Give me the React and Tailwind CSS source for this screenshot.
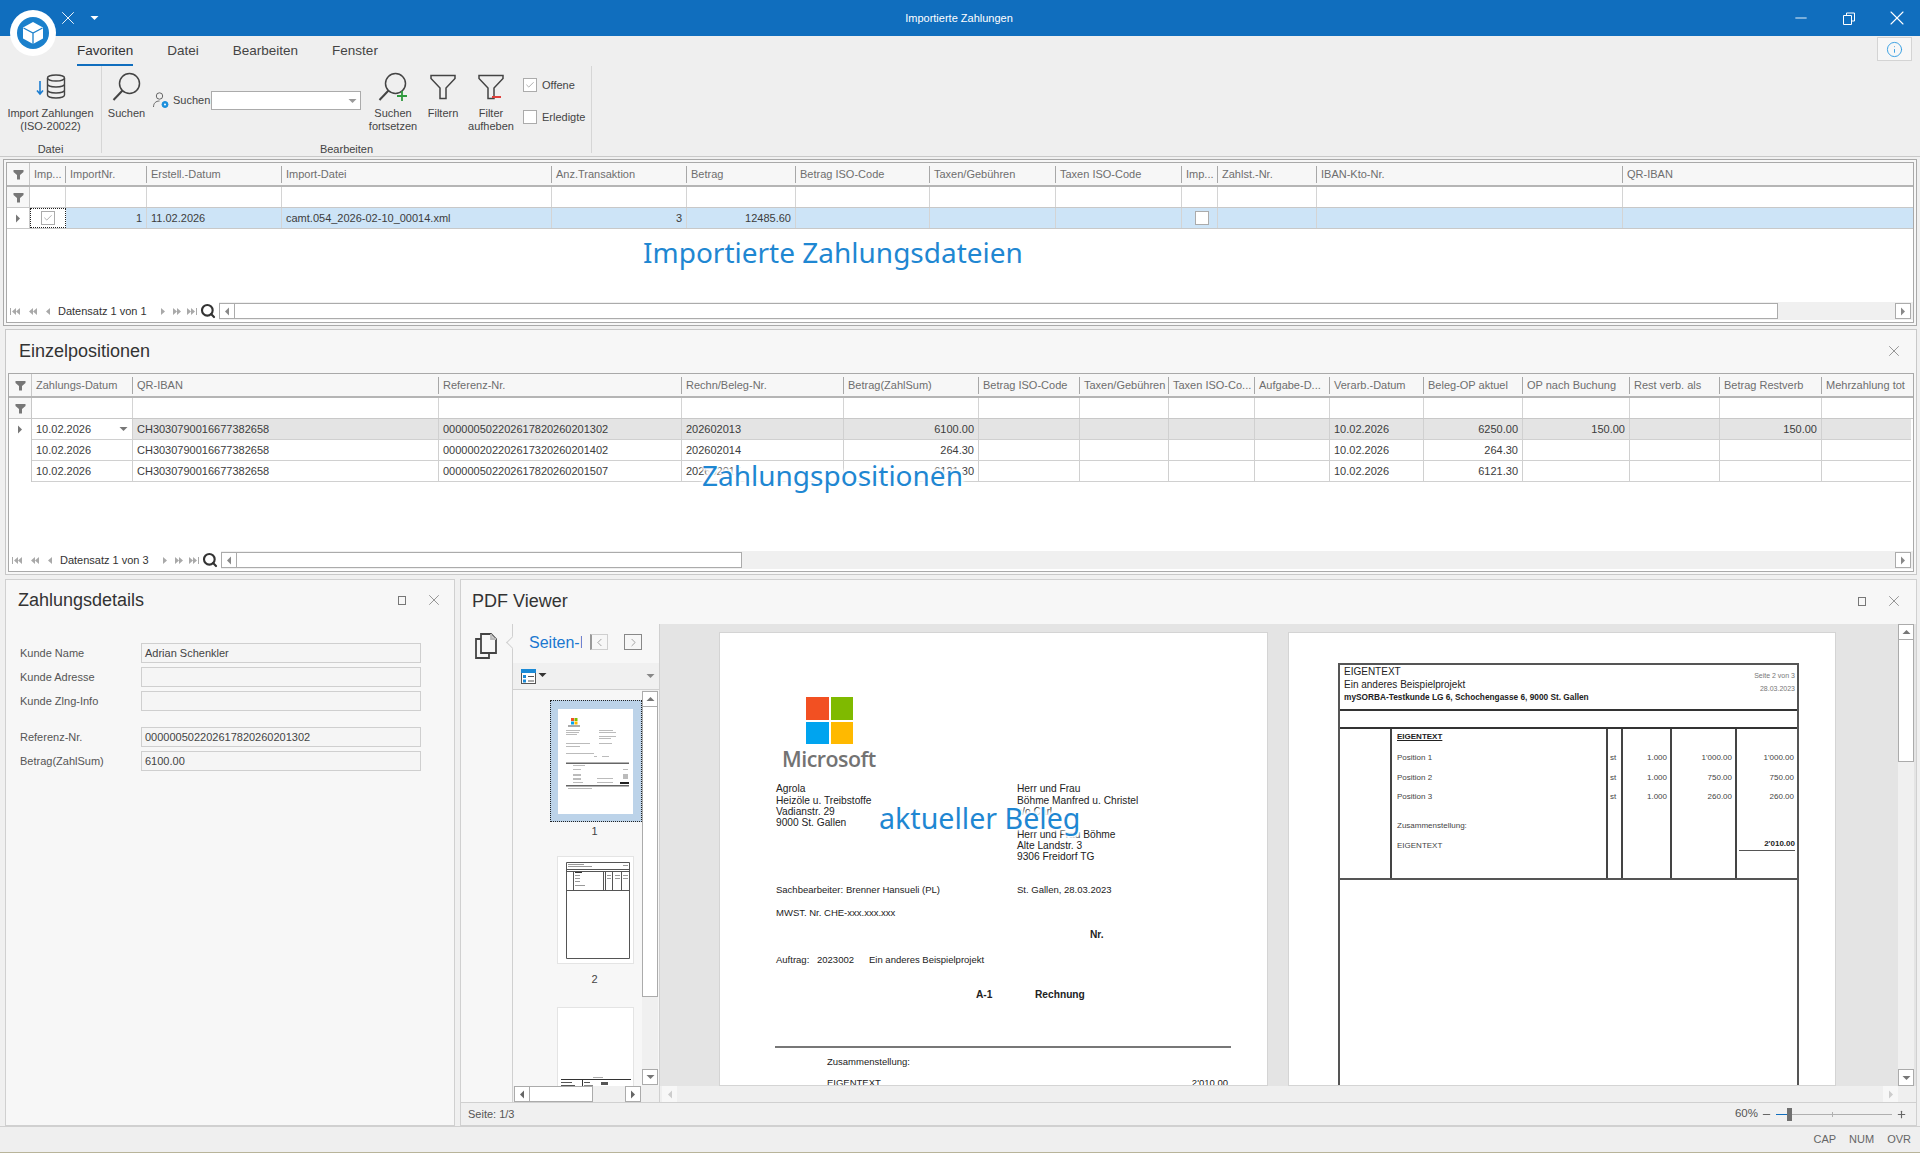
import { Check, X, Minus, Plus, Search, Info, ChevronLeft, ChevronRight } from 'lucide-react';

const grid1Cols = [
  { label: 'Imp...', w: 36 }, { label: 'ImportNr.', w: 81 }, { label: 'Erstell.-Datum', w: 135 }, { label: 'Import-Datei', w: 270 },
  { label: 'Anz.Transaktion', w: 135 }, { label: 'Betrag', w: 109 }, { label: 'Betrag ISO-Code', w: 134 }, { label: 'Taxen/Gebühren', w: 126 },
  { label: 'Taxen ISO-Code', w: 126 }, { label: 'Imp...', w: 36 }, { label: 'Zahlst.-Nr.', w: 99 }, { label: 'IBAN-Kto-Nr.', w: 306 }, { label: 'QR-IBAN', w: 290 },
];

const grid2Cols = [
  { label: 'Zahlungs-Datum', w: 101 }, { label: 'QR-IBAN', w: 306 }, { label: 'Referenz-Nr.', w: 243 }, { label: 'Rechn/Beleg-Nr.', w: 162 },
  { label: 'Betrag(ZahlSum)', w: 135 }, { label: 'Betrag ISO-Code', w: 101 }, { label: 'Taxen/Gebühren', w: 89 }, { label: 'Taxen ISO-Co...', w: 86 },
  { label: 'Aufgabe-D...', w: 75 }, { label: 'Verarb.-Datum', w: 94 }, { label: 'Beleg-OP aktuel', w: 99 }, { label: 'OP nach Buchung', w: 107 },
  { label: 'Rest verb. als', w: 90 }, { label: 'Betrag Restverb', w: 102 }, { label: 'Mehrzahlung tot', w: 89 },
];

const positions = [
  { date: '10.02.2026', iban: 'CH3030790016677382658', ref: '000000502202617820260201302', doc: '202602013', sum: '6100.00', done: '10.02.2026', op: '6250.00', after: '150.00', rest: '150.00' },
  { date: '10.02.2026', iban: 'CH3030790016677382658', ref: '000000202202617320260201402', doc: '202602014', sum: '264.30', done: '10.02.2026', op: '264.30', after: '', rest: '' },
  { date: '10.02.2026', iban: 'CH3030790016677382658', ref: '000000502202617820260201507', doc: '202602015', sum: '6121.30', done: '10.02.2026', op: '6121.30', after: '', rest: '' },
];

const Funnel = () => (
  <svg width="11" height="11" viewBox="0 0 11 11"><path d="M0.5 1h10v2L7 6v4.5H4V6L0.5 3z" fill="#777" /></svg>
);

const Arrow = ({ dir = 'right', color = '#666' }) => (
  <svg width="6" height="9" viewBox="0 0 6 9"><path d={dir === 'right' ? 'M1 0.5l4 4-4 4z' : 'M5 0.5l-4 4 4 4z'} fill={color} /></svg>
);

const Caret = ({ up = false, color = '#777' }) => (
  <svg width="9" height="6" viewBox="0 0 9 6"><path d={up ? 'M0.5 5l4-4 4 4z' : 'M0.5 1l4 4 4-4z'} fill={color} /></svg>
);

const CheckBox = ({ checked }) => (
  <span className="w-[14px] h-[14px] flex items-center justify-center bg-white border border-[#ababab] shrink-0">
    {checked && <Check size={10} strokeWidth={1.4} className="text-[#777]" />}
  </span>
);

const NavGlyph = ({ d, className = '' }) => (
  <svg width="12" height="9" viewBox="0 0 12 9" className={className}><path d={d} fill="#a9a9a9" /></svg>
);

const Pager = ({ text, thumbW }) => (
  <div className="h-[22px] flex items-center shrink-0 pl-[2px]">
    <NavGlyph d="M1 1h1v7H1zM7 1v7L3 4.5zM11 1v7L7 4.5z" />
    <NavGlyph d="M6 1v7L2 4.5zM10 1v7L6 4.5z" className="ml-[6px]" />
    <NavGlyph d="M7 1v7L3 4.5z" className="ml-[4px]" />
    <span className="ml-[3px] w-[96px] text-[#333]">{text}</span>
    <NavGlyph d="M5 1v7l4-3.5z" className="ml-[2px]" />
    <NavGlyph d="M2 1v7l4-3.5zM6 1v7l4-3.5z" className="ml-[3px]" />
    <NavGlyph d="M1 1v7l4-3.5zM5 1v7l4-3.5zM10 1h1v7h-1z" className="ml-[3px]" />
    <Search size={16} strokeWidth={3.2} className="ml-[2px] text-[#333]" />
    <div className="ml-[3px] flex-1 h-[18px] bg-[#f0f0f0] flex items-center pr-[2px]">
      <div className="w-[16px] h-[16px] bg-white border border-[#ababab] flex items-center justify-center"><Arrow dir="left" color="#888" /></div>
      <div className="h-[16px] bg-white border border-l-0 border-[#ababab]" style={{ width: thumbW }} />
      <div className="flex-1" />
      <div className="w-[16px] h-[16px] bg-white border border-[#ababab] flex items-center justify-center"><Arrow color="#888" /></div>
    </div>
  </div>
);

const HeaderRow = ({ cols, indW }) => (
  <div className="flex h-[24px] shrink-0 bg-[#f7f7f7] border-b-2 border-[#b5b5b5] text-[#6e6e6e]">
    <div className="flex items-center justify-center shrink-0 border-r border-[#c8c8c8]" style={{ width: indW }}><Funnel /></div>
    {cols.map((c, i) => (
      <div key={i} className="flex items-center shrink-0 pl-[4px] pt-[1px] whitespace-nowrap overflow-hidden relative" style={{ width: c.w }}>
        {c.label}
        {i < cols.length - 1 && <span className="absolute right-0 top-[3px] bottom-[2px] w-px bg-[#a8a8a8]" />}
      </div>
    ))}
  </div>
);

const FilterRow = ({ cols, indW }) => (
  <div className="flex h-[21px] shrink-0 bg-white border-b border-[#c8c8c8]">
    <div className="flex items-center justify-center shrink-0 bg-[#f7f7f7] border-r border-[#c8c8c8]" style={{ width: indW }}><Funnel /></div>
    {cols.map((c, i) => <div key={i} className="shrink-0 border-r border-[#d4d4d4] last:border-r-0" style={{ width: c.w }} />)}
  </div>
);

const ImportGrid = () => {
  const values = { 2: '11.02.2026', 3: 'camt.054_2026-02-10_00014.xml' };
  const right = { 1: '1', 4: '3', 5: '12485.60' };
  return (
    <div className="flex-1 flex flex-col bg-white border border-[#a9a9a9] min-h-0 relative">
      <HeaderRow cols={grid1Cols} indW={23} />
      <FilterRow cols={grid1Cols} indW={23} />
      <div className="flex h-[21px] shrink-0 border-b border-[#c8c8c8] bg-[#cde4f7] text-[#3c3c3c]">
        <div className="w-[23px] shrink-0 flex items-center justify-center bg-white border-r border-[#c8c8c8]"><Arrow color="#777" /></div>
        {grid1Cols.map((c, i) => i === 0 ? (
          <div key={i} className="shrink-0 flex items-center justify-center bg-white border border-dotted border-[#222]" style={{ width: c.w }}><CheckBox checked /></div>
        ) : (
          <div key={i} className={`shrink-0 flex items-center border-r border-[#d4d4d4] last:border-r-0 ${right[i] ? 'justify-end pr-[4px]' : 'pl-[4px]'} ${i === 9 ? 'justify-center pl-0' : ''}`} style={{ width: c.w }}>
            {i === 9 && <CheckBox />}
            {right[i] || values[i]}
          </div>
        ))}
      </div>
      <div className="flex-1" />
      <Pager text="Datensatz 1 von 1" thumbW={1543} />
    </div>
  );
};

const PositionGrid = () => {
  const keyFor = { 0: 'date', 1: 'iban', 2: 'ref', 3: 'doc', 4: 'sum', 9: 'done', 10: 'op', 11: 'after', 13: 'rest' };
  const right = [4, 10, 11, 13];
  return (
    <div className="flex-1 flex flex-col bg-white border border-[#a9a9a9] min-h-0">
      <HeaderRow cols={grid2Cols} indW={23} />
      <FilterRow cols={grid2Cols} indW={23} />
      {positions.map((r, ri) => (
        <div key={ri} className="flex h-[21px] shrink-0 text-[#3c3c3c]">
          <div className="w-[23px] shrink-0 flex items-center justify-center border-r border-[#c8c8c8]">{ri === 0 && <Arrow color="#777" />}</div>
          {grid2Cols.map((c, i) => {
            const val = r[keyFor[i]];
            return (
              <div key={i} className={`shrink-0 flex items-center border-b border-r border-[#d0d0d0] last:border-r-0 whitespace-nowrap ${ri === 0 && i > 0 ? 'bg-[#e4e4e4]' : ''} ${right.includes(i) ? 'justify-end pr-[4px]' : 'pl-[4px]'}`} style={{ width: c.w }}>
                {val}
                {ri === 0 && i === 0 && <span className="ml-auto mr-[4px]"><Caret /></span>}
              </div>
            );
          })}
        </div>
      ))}
      <div className="flex-1" />
      <Pager text="Datensatz 1 von 3" thumbW={505} />
    </div>
  );
};

const RibbonButton = ({ w, icon, lines }) => (
  <div className="flex flex-col items-center shrink-0" style={{ width: w }}>
    <div className="h-[41px] flex items-center justify-center">{icon}</div>
    {lines.map(l => <span key={l} className="leading-[13px] whitespace-nowrap text-[#444]">{l}</span>)}
  </div>
);

const Lens = ({ extra }) => (
  <svg width="30" height="30" viewBox="0 0 30 30" fill="none" stroke="#444" strokeWidth="1.5">
    <circle cx="17.5" cy="11.5" r="10" />
    <path d="M10.5 18.5L1.5 28" strokeWidth="2" />
    {extra}
  </svg>
);

const FilterBig = ({ extra }) => (
  <svg width="26" height="26" viewBox="0 0 26 26" fill="none" stroke="#444" strokeWidth="1.5">
    <path d="M1 1.5h24v3L16 14v10.5h-6V14L1 4.5z" />
    {extra}
  </svg>
);

const Ribbon = () => (
  <div className="h-[121px] shrink-0 bg-[#efefef] border-b border-[#c9c9c9] relative">
    <div className="h-[30px] flex items-end pl-[77px] gap-[34px] text-[13.5px] text-[#444]">
      <span className="h-[25px] border-b-[2px] border-[#106ebe] text-[#333]">Favoriten</span>
      <span className="h-[25px]">Datei</span>
      <span className="h-[25px]">Bearbeiten</span>
      <span className="h-[25px]">Fenster</span>
    </div>
    <div className="h-[87px] flex">
      <div className="w-[102px] border-r border-[#d6d6d6] flex flex-col items-center">
        <RibbonButton w={100} lines={['Import Zahlungen', '(ISO-20022)']} icon={
          <svg width="30" height="26" viewBox="0 0 30 26" fill="none" stroke="#444" strokeWidth="1.4">
            <ellipse cx="20" cy="4" rx="8.5" ry="3" />
            <path d="M11.5 4v17c0 1.7 3.8 3 8.500 3s8.500-1.300 8.500-3V4M11.500 10c0 1.700 3.800 3 8.500 3s8.500-1.300 8.500-3M11.500 16c0 1.700 3.800 3 8.500 3s8.500-1.300 8.500-3" />
            <path d="M4 7v13M1 16.500L4 20l3-3.500" stroke="#1b7cd0" strokeWidth="1.6" />
          </svg>
        } />
        <span className="mt-auto mb-[-4px] text-[#444]">Datei</span>
      </div>
      <div className="w-[490px] border-r border-[#d6d6d6] flex flex-col">
        <div className="flex pl-[3px]">
          <RibbonButton w={43} lines={['Suchen']} icon={<Lens />} />
          <div className="w-[216px] shrink-0 flex items-center h-[19px] mt-[25px] pl-[5px] text-[#444]">
            <svg width="16" height="17" viewBox="0 0 16 17" fill="none" stroke="#666" strokeWidth="1">
              <circle cx="6.500" cy="4" r="3.200" />
              <path d="M0.500 15c0-4 2.500-6 6-6" />
              <circle cx="12" cy="12.500" r="3" fill="#1b8fdc" stroke="#1b8fdc" />
              <circle cx="12" cy="12.500" r="1" fill="#fff" stroke="none" />
            </svg>
            <span className="ml-[4px] w-[38px]">Suchen</span>
            <div className="w-[150px] h-[19px] bg-white border border-[#ababab] flex items-center justify-end pr-[3px]"><Caret color="#999" /></div>
          </div>
          <RibbonButton w={58} lines={['Suchen', 'fortsetzen']} icon={<Lens extra={<path d="M24 19v10M19 24h10" stroke="#2f9a3e" strokeWidth="1.8" />} />} />
          <RibbonButton w={42} lines={['Filtern']} icon={<FilterBig />} />
          <RibbonButton w={54} lines={['Filter', 'aufheben']} icon={<FilterBig extra={<path d="M14 23h9" stroke="#e0403c" strokeWidth="2" />} />} />
          <div className="ml-[5px] pt-[11px] flex flex-col gap-[15px] text-[#444]">
            <div className="flex items-center gap-[5px]"><CheckBox checked /><span>Offene</span></div>
            <div className="flex items-center gap-[5px]"><CheckBox /><span>Erledigte</span></div>
          </div>
        </div>
        <span className="mt-auto mb-[-4px] text-center text-[#444]">Bearbeiten</span>
      </div>
      <div className="flex-1" />
    </div>
    <div className="absolute right-[8px] top-[1px] w-[35px] h-[24px] bg-[#f7f7f7] border border-[#d4d4d4] flex items-center justify-center">
      <Info size={17} strokeWidth={1.3} className="text-[#2f9be0]" />
    </div>
  </div>
);

const TitleBar = () => (
  <div className="h-9 shrink-0 bg-[#106ebe] flex items-center text-white text-[11px] relative">
    <X size={22} strokeWidth={1} className="ml-[57px]" />
    <span className="ml-[11px]"><Caret color="#fff" /></span>
    <span className="absolute left-[905px] w-[108px] text-center whitespace-nowrap">Importierte Zahlungen</span>
    <div className="ml-auto flex items-center gap-[2px]">
      <span className="w-[46px] flex justify-center"><Minus size={18} strokeWidth={1.2} /></span>
      <span className="w-[46px] flex justify-center">
        <svg width="12" height="13" viewBox="0 0 12 13" fill="none" stroke="#fff"><path d="M3.500 3V1h8v8H9M.5 3.500h8v9h-8z" /></svg>
      </span>
      <span className="w-[46px] flex justify-center"><X size={24} strokeWidth={1.1} /></span>
    </div>
  </div>
);

const Logo = () => (
  <div className="absolute left-[10px] top-[10px] w-[46px] h-[46px] rounded-full bg-white flex items-center justify-center">
    <svg width="32" height="32" viewBox="0 0 32 32">
      <circle cx="16" cy="16" r="16" fill="#1b80cc" />
      <path d="M16 5l10 5.500v11L16 27 6 21.500v-11z" fill="#fff" />
      <path d="M6.500 11L16 16l9.500-5M16 16v11" fill="none" stroke="#1b80cc" strokeWidth="1.3" />
    </svg>
  </div>
);

const Field = ({ label, value, className = '' }) => (
  <div className={`flex items-center h-[20px] ${className}`}>
    <span className="w-[121px] shrink-0 text-[#555]">{label}</span>
    <div className="w-[280px] h-[20px] border border-[#cfcfcf] bg-[#f5f5f5] pl-[3px] flex items-center text-[#444]">{value}</div>
  </div>
);

const PanelTitle = ({ children }) => <span className="text-[18px] leading-none text-[#333]">{children}</span>;

const WinIcons = () => (
  <div className="ml-auto flex items-center gap-[19px] text-[#777]">
    <span className="w-[8px] h-[9px] border border-[#777]" />
    <X size={18} strokeWidth={1} />
  </div>
);

const ZahlungsDetails = () => (
  <div className="w-[450px] shrink-0 bg-[#f7f7f7] border border-[#d0d0d0] flex flex-col">
    <div className="h-[42px] flex items-center pl-[12px] pr-[11px] pb-[2px] shrink-0"><PanelTitle>Zahlungsdetails</PanelTitle><WinIcons /></div>
    <div className="pl-[14px] pt-[21px]">
      <Field label="Kunde Name" value="Adrian Schenkler" />
      <Field label="Kunde Adresse" className="mt-[4px]" />
      <Field label="Kunde Zlng-Info" className="mt-[4px]" />
      <Field label="Referenz-Nr." value="000000502202617820260201302" className="mt-[16px]" />
      <Field label="Betrag(ZahlSum)" value="6100.00" className="mt-[4px]" />
    </div>
  </div>
);

// Thumbnails of the two pages, drawn small
const Thumb1 = () => (
  <svg width="75" height="105" viewBox="0 0 75 105" className="block">
    <rect x="13" y="9" width="3" height="3" fill="#f25022" /><rect x="16.500" y="9" width="3" height="3" fill="#7fba00" />
    <rect x="13" y="12.500" width="3" height="3" fill="#00a4ef" /><rect x="16.500" y="12.500" width="3" height="3" fill="#ffb900" />
    <rect x="10" y="16" width="12" height="2" fill="#aaa" />
    <g fill="#bbb">
      <rect x="8" y="21" width="14" height="1" /><rect x="8" y="23" width="13" height="1" /><rect x="8" y="25" width="11" height="1" />
      <rect x="41" y="21" width="14" height="1" /><rect x="41" y="23" width="17" height="1" /><rect x="41" y="27" width="17" height="1" /><rect x="41" y="29" width="12" height="1" />
      <rect x="8" y="34" width="24" height="1" /><rect x="41" y="34" width="13" height="1" /><rect x="8" y="37" width="14" height="1" />
      <rect x="8" y="44" width="28" height="1" /><rect x="36" y="47" width="3" height="1" /><rect x="44" y="47" width="7" height="1" />
      <rect x="15" y="56" width="12" height="1" /><rect x="15" y="60" width="8" height="1" /><rect x="15" y="65" width="8" height="2" />
      <rect x="15" y="69" width="8" height="2" /><rect x="15" y="73" width="10" height="1" /><rect x="39" y="69" width="16" height="1" /><rect x="39" y="73" width="16" height="1" />
      <rect x="65" y="60" width="5" height="1" /><rect x="65" y="65" width="5" height="5" /><rect x="10" y="79" width="24" height="1" />
    </g>
    <rect x="8" y="53.500" width="63" height="1.500" fill="#666" />
    <rect x="8" y="76" width="63" height="1.500" fill="#666" />
    <rect x="62" y="73" width="9" height="2" fill="#222" />
  </svg>
);

const Thumb2 = () => (
  <svg width="75" height="106" viewBox="0 0 75 106" className="block" fill="none" stroke="#555">
    <path d="M8.500 5.500h63v96h-63zM8.500 12.500h63M8.500 14.500h63M8.500 33.500h63M15.500 14.500v19M45.500 14.500v19M47.500 14.500v19M54.500 14.500v19M63.500 14.500v19" />
    <g fill="#999" stroke="none">
      <rect x="10" y="7" width="16" height="1" /><rect x="10" y="9" width="24" height="1" /><rect x="65" y="8" width="5" height="1" />
      <rect x="17" y="15" width="7" height="1" fill="#333" /><rect x="17" y="18" width="5" height="1" /><rect x="17" y="21" width="5" height="1" /><rect x="17" y="24" width="5" height="1" /><rect x="17" y="28" width="10" height="1" />
      <rect x="49" y="18" width="4" height="1" /><rect x="57" y="18" width="5" height="1" /><rect x="65" y="18" width="5" height="1" /><rect x="49" y="21" width="4" height="1" /><rect x="57" y="21" width="5" height="1" /><rect x="65" y="21" width="5" height="1" />
    </g>
  </svg>
);

const Thumb3 = () => (
  <svg width="75" height="106" viewBox="0 0 75 106" className="block">
    <rect x="35" y="69" width="10" height="1" fill="#aaa" />
    <rect x="3" y="71" width="70" height="1" fill="#333" />
    <rect x="24" y="71" width="1" height="8" fill="#333" />
    <rect x="3" y="74" width="11" height="1" fill="#555" /><rect x="3" y="77" width="14" height="1" fill="#555" />
    <rect x="26" y="74" width="6" height="1" fill="#555" /><rect x="43" y="74" width="7" height="3" fill="#555" /><rect x="26" y="77" width="9" height="1" fill="#888" />
  </svg>
);

const ThumbPanel = () => (
  <div className="w-[147px] shrink-0 flex flex-col border-r border-[#d0d0d0] bg-[#f7f7f7]">
    <div className="h-[39px] shrink-0 flex items-start pl-[16px] pt-[10px]">
      <span className="w-[53px] overflow-hidden whitespace-nowrap text-[16px] leading-[18px] text-[#1b78d0]">Seiten-Miniaturen</span>
      <div className="ml-[8px] w-[18px] h-[16px] border border-[#cfcfcf] border-l-[2px] border-l-[#999] flex items-center justify-center"><ChevronLeft size={13} strokeWidth={1.2} className="text-[#777]" /></div>
      <div className="ml-[16px] w-[18px] h-[16px] border border-[#888] flex items-center justify-center"><ChevronRight size={13} strokeWidth={1.2} className="text-[#777]" /></div>
    </div>
    <div className="h-[27px] shrink-0 bg-[#f0f0f0] border-b border-[#d0d0d0] flex items-center pl-[8px] pr-[4px]">
      <svg width="15" height="15" viewBox="0 0 15 15">
        <rect x="0.500" y="0.500" width="14" height="14" fill="#fff" stroke="#555" /><rect x="0" y="0" width="15" height="4" fill="#1b8ad6" />
        <rect x="2" y="6" width="3" height="3" fill="#1b8ad6" /><rect x="2" y="10.500" width="3" height="3" fill="#1b8ad6" /><rect x="7" y="7" width="6" height="1" fill="#555" /><rect x="7" y="11.500" width="6" height="1" fill="#555" />
      </svg>
      <span className="ml-[2px] -mt-[3px]"><Caret color="#333" /></span>
      <span className="ml-auto"><Caret color="#888" /></span>
    </div>
    <div className="flex-1 flex min-h-0">
      <div className="flex-1 overflow-hidden flex flex-col items-center pl-[36px] pt-[10px]">
        <div className="w-[92px] h-[122px] shrink-0 bg-[#bcd3e9] border border-dotted border-[#222] flex items-center justify-center">
          <div className="bg-white"><Thumb1 /></div>
        </div>
        <span className="h-[17px] mt-[1px] leading-[17px] text-[#444] -ml-[2px] shrink-0">1</span>
        <div className="mt-[16px] w-[77px] h-[108px] shrink-0 bg-white border border-[#e4e4e4]"><Thumb2 /></div>
        <span className="h-[17px] mt-[7px] leading-[17px] text-[#444] -ml-[2px] shrink-0">2</span>
        <div className="mt-[19px] w-[77px] h-[108px] shrink-0 bg-white border border-[#e4e4e4]"><Thumb3 /></div>
      </div>
      <div className="w-[16px] shrink-0 flex flex-col bg-[#f0f0f0] py-[1px] mr-[1px]">
        <div className="h-[16px] bg-white border border-[#ababab] flex items-center justify-center"><Caret up /></div>
        <div className="h-[290px] bg-white border border-t-0 border-[#ababab]" />
        <div className="mt-auto h-[16px] bg-white border border-[#ababab] flex items-center justify-center"><Caret /></div>
      </div>
    </div>
    <div className="h-[16px] shrink-0 flex bg-[#f0f0f0] pl-[1px] pr-[18px]">
      <div className="w-[16px] bg-white border border-[#ababab] flex items-center justify-center"><Arrow dir="left" /></div>
      <div className="w-[63px] bg-white border border-l-0 border-[#ababab]" />
      <div className="ml-auto w-[16px] bg-white border border-[#ababab] flex items-center justify-center"><Arrow /></div>
    </div>
  </div>
);

// The rendered PDF pages are free canvases, text sits where the document put it
const DocText = ({ x, y, bold, small, children, right }) => (
  <span className={`absolute whitespace-nowrap leading-none ${bold ? 'font-bold' : ''} ${small ? 'text-[9.5px]' : ''}`} style={right ? { right: x, top: y } : { left: x, top: y }}>{children}</span>
);

const PageOne = () => (
  <div className="w-[549px] shrink-0 bg-white border border-[#d4d4d4] relative overflow-hidden font-['Liberation_Sans',sans-serif] text-[10.2px] text-[#222]">
    <div className="absolute left-[86px] top-[64px] w-[47px] h-[47px] grid grid-cols-2 gap-[2px]">
      <div className="bg-[#f25022]" /><div className="bg-[#7fba00]" /><div className="bg-[#00a4ef]" /><div className="bg-[#ffb900]" />
    </div>
    <span className="absolute left-[62px] top-[111px] font-['Open_Sans',sans-serif] font-semibold text-[21.4px] leading-[30px] tracking-[-0.5px] text-[#737373]">Microsoft</span>
    <DocText x={56} y={151}>Agrola</DocText>
    <DocText x={56} y={163}>Heizöle u. Treibstoffe</DocText>
    <DocText x={56} y={174}>Vadianstr. 29</DocText>
    <DocText x={56} y={185}>9000 St. Gallen</DocText>
    <DocText x={297} y={151}>Herr und Frau</DocText>
    <DocText x={297} y={163}>Böhme Manfred u. Christel</DocText>
    <DocText x={297} y={174}>c/o Carl</DocText>
    <DocText x={297} y={197}>Herr und Frau Böhme</DocText>
    <DocText x={297} y={208}>Alte Landstr. 3</DocText>
    <DocText x={297} y={219}>9306 Freidorf TG</DocText>
    <DocText x={56} y={252} small>Sachbearbeiter:</DocText>
    <DocText x={126} y={252} small>Brenner Hansueli (PL)</DocText>
    <DocText x={297} y={252} small>St. Gallen, 28.03.2023</DocText>
    <DocText x={56} y={275} small>MWST. Nr. CHE-xxx.xxx.xxx</DocText>
    <DocText x={370} y={297} bold>Nr.</DocText>
    <DocText x={56} y={322} small>Auftrag:</DocText>
    <DocText x={97} y={322} small>2023002</DocText>
    <DocText x={149} y={322} small>Ein anderes Beispielprojekt</DocText>
    <DocText x={256} y={357} bold>A-1</DocText>
    <DocText x={315} y={357} bold>Rechnung</DocText>
    <div className="absolute left-[55px] top-[413px] w-[456px] h-[2px] bg-[#777]" />
    <DocText x={107} y={424} small>Zusammenstellung:</DocText>
    <DocText x={107} y={445} small>EIGENTEXT</DocText>
    <DocText x={39} y={445} small right>2'010.00</DocText>
  </div>
);

const PosRow = ({ y, name, qty, price }) => (
  <>
    <DocText x={57} y={y}>{name}</DocText>
    <DocText x={270} y={y}>st</DocText>
    <DocText x={130} y={y} right>{qty}</DocText>
    <DocText x={65} y={y} right>{price}</DocText>
    <DocText x={3} y={y} right>{price}</DocText>
  </>
);

const PageTwo = () => (
  <div className="w-[548px] shrink-0 bg-white border border-[#d4d4d4] relative overflow-hidden font-['Liberation_Sans',sans-serif] text-[8px] text-[#444]">
    <div className="absolute left-[49px] top-[30px] w-[461px] h-[600px] border-2 border-[#555] border-b-0">
      <div className="h-[46px] border-b-2 border-[#333] relative text-[#222]">
        <DocText x={4} y={2}><span className="text-[10px]">EIGENTEXT</span></DocText>
        <DocText x={4} y={15}><span className="text-[10px]">Ein anderes Beispielprojekt</span></DocText>
        <DocText x={4} y={28} bold><span className="text-[8.3px]">mySORBA-Testkunde LG 6, Schochengasse 6, 9000 St. Gallen</span></DocText>
        <DocText x={2} y={7} right><span className="text-[7px] text-[#777]">Seite 2 von 3</span></DocText>
        <DocText x={2} y={20} right><span className="text-[7px] text-[#777]">28.03.2023</span></DocText>
      </div>
      <div className="h-[18px] border-b-2 border-[#333]" />
      <div className="h-[151px] border-b-2 border-[#555] flex relative">
        <div className="w-[52px] border-r-2 border-[#444] shrink-0" />
        <div className="w-[216px] border-r-2 border-[#444] shrink-0" />
        <div className="w-[15px] border-r-2 border-[#444] shrink-0" />
        <div className="w-[49px] border-r-2 border-[#444] shrink-0" />
        <div className="w-[65px] border-r-2 border-[#444] shrink-0" />
        <DocText x={57} y={4} bold><span className="underline text-[#222]">EIGENTEXT</span></DocText>
        <PosRow y={25} name="Position 1" qty="1.000" price="1'000.00" />
        <PosRow y={45} name="Position 2" qty="1.000" price="750.00" />
        <PosRow y={64} name="Position 3" qty="1.000" price="260.00" />
        <DocText x={57} y={93}>Zusammenstellung:</DocText>
        <DocText x={57} y={113}>EIGENTEXT</DocText>
        <div className="absolute right-[2px] top-[111px] w-[56px] h-[11px] border-b border-[#555] text-right font-bold text-[#222] leading-none">2'010.00</div>
      </div>
    </div>
  </div>
);

const PdfViewer = () => (
  <div className="flex-1 min-w-0 bg-[#f7f7f7] border border-[#d0d0d0] flex flex-col relative">
    <div className="h-[44px] shrink-0 flex items-center pl-[11px] pr-[13px] pb-[2px]"><PanelTitle>PDF Viewer</PanelTitle><WinIcons /></div>
    <div className="flex-1 flex min-h-0">
      <div className="w-[52px] shrink-0 border-r border-[#d0d0d0] relative pl-[13px] pt-[9px]">
        <svg width="23" height="26" viewBox="0 0 23 26" fill="none" stroke="#444" strokeWidth="1.800">
          <path d="M7 1h10l5 5v14H7zM7 6H2v19h13v-5" />
          <path d="M17 1v5h5" fill="#ccc" stroke="#bbb" />
        </svg>
        <span className="absolute right-[-5px] top-[14px] w-[9px] h-[9px] rotate-45 bg-[#f7f7f7] border-l border-b border-[#d0d0d0]" />
      </div>
      <ThumbPanel />
      <div className="flex-1 min-w-0 flex flex-col">
        <div className="flex-1 flex min-h-0 bg-[#e4e4e4]">
          <div className="flex-1 min-w-0 overflow-hidden flex gap-[20px] pl-[59px] pt-[8px] pb-0">
            <PageOne />
            <PageTwo />
          </div>
          <div className="w-[16px] shrink-0 bg-[#f0f0f0] flex flex-col mr-[2px]">
            <div className="h-[16px] bg-white border border-[#ababab] flex items-center justify-center"><Caret up /></div>
            <div className="h-[122px] bg-white border border-t-0 border-[#ababab]" />
            <div className="mt-auto h-[17px] bg-white border border-[#ababab] flex items-center justify-center"><Caret /></div>
          </div>
        </div>
        <div className="h-[16px] shrink-0 bg-[#efefef] flex pl-[2px] pr-[18px]">
          <div className="w-[15px] bg-[#f7f7f7] flex items-center justify-center"><Arrow dir="left" color="#ccc" /></div>
          <div className="ml-auto w-[15px] bg-[#f7f7f7] flex items-center justify-center"><Arrow color="#ccc" /></div>
        </div>
      </div>
    </div>
    <div className="h-[23px] shrink-0 bg-[#f0f0f0] border-t border-[#d0d0d0] flex items-center pl-[7px] pr-[9px] text-[#555]">
      <span>Seite: 1/3</span>
      <span className="ml-auto text-[11.5px]">60%</span>
      <span className="ml-[3px] text-[#666]"><Minus size={11} strokeWidth={2.500} /></span>
      <div className="ml-[4px] w-[116px] h-[16px] relative flex items-center">
        <div className="w-full h-px bg-[#b0b0b0]" />
        <div className="absolute left-0 w-[13px] h-px bg-[#106ebe]" />
        <div className="absolute left-[56px] w-px h-[5px] bg-[#b0b0b0]" />
        <div className="absolute left-[11px] w-[5px] h-[13px] bg-[#707070]" />
      </div>
      <span className="ml-[4px] text-[#666]"><Plus size={11} strokeWidth={2.500} /></span>
    </div>
  </div>
);

const Callout = ({ className, children }) => (
  <span className={`absolute whitespace-nowrap font-['Noto_Sans',sans-serif] leading-none text-[#1f87d2] [text-shadow:0_0_2px_#fff,0_0_2px_#fff,0_0_3px_#fff,0_0_3px_#fff,0_0_4px_#fff,0_0_4px_#fff,0_0_4px_#fff,0_0_5px_#fff,0_0_5px_#fff,0_0_5px_#fff] ${className}`}>{children}</span>
);

export default function App() {
  return (
    <div className="w-[1920px] h-[1153px] overflow-hidden relative flex flex-col bg-[#f0f0f0] font-['Liberation_Sans',sans-serif] text-[11px] text-[#444]">
      <TitleBar />
      <Ribbon />
      <div className="h-[170px] shrink-0 pt-[2px] px-[3px]">
        <div className="h-[167px] bg-[#f7f7f7] border border-[#a9a9a9] p-[2px] flex flex-col"><ImportGrid /></div>
      </div>
      <div className="h-[248px] shrink-0 pt-[2px] pl-[5px] pr-[3px]">
        <div className="h-[246px] bg-[#f7f7f7] border border-[#c8c8c8] flex flex-col px-[2px] pb-[2px]">
          <div className="h-[43px] shrink-0 flex items-center pl-[11px] pr-[11px] pb-[2px]"><PanelTitle>Einzelpositionen</PanelTitle><span className="ml-auto text-[#777]"><X size={18} strokeWidth={1} /></span></div>
          <div className="flex-1 min-h-0 flex flex-col"><PositionGrid /></div>
        </div>
      </div>
      <div className="h-[551px] shrink-0 pt-[4px] pl-[5px] pr-[3px] flex gap-[5px]">
        <ZahlungsDetails />
        <PdfViewer />
      </div>
      <div className="flex-1 border-t border-[#d0d0d0] bg-[#efefef] border-b border-b-[#b8b49a] flex items-center justify-end pr-[9px] gap-[13px] text-[#666]">
        <span>CAP</span><span>NUM</span><span>OVR</span>
      </div>
      <Callout className="left-[643px] top-[238px] text-[28px]">Importierte Zahlungsdateien</Callout>
      <Callout className="left-[702px] top-[461px] text-[28px]">Zahlungspositionen</Callout>
      <Callout className="left-[879px] top-[804px] text-[28.6px]">aktueller Beleg</Callout>
      <Logo />
    </div>
  );
}
